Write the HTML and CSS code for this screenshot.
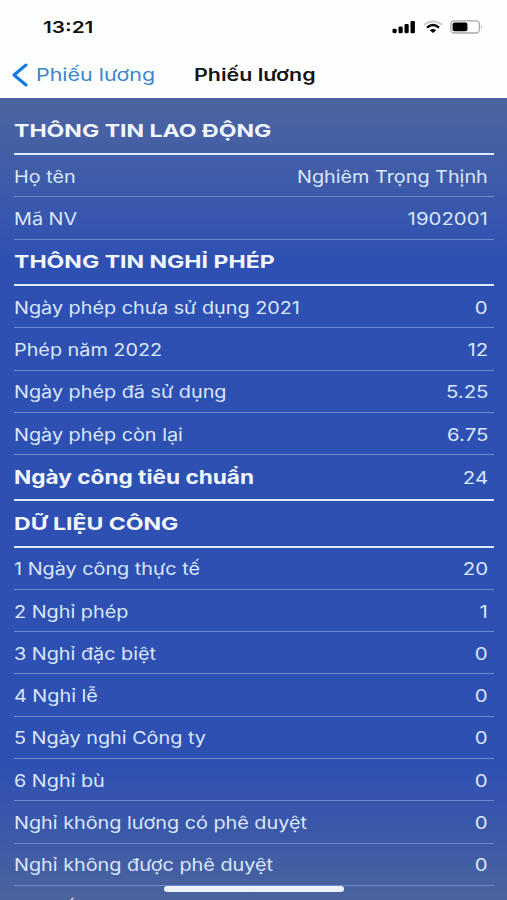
FILE: index.html
```
<!DOCTYPE html>
<html lang="vi">
<head>
    <meta charset="UTF-8">
    <meta name="viewport" content="width=device-width, initial-scale=1.0">
    <title>Phiếu lương</title>
    <link rel="stylesheet" href="styles.css">
</head>
<body>
    <div class="status-bar">
        <span class="time">13:21</span>
        <div class="status-icons">
            <svg class="signal" width="24" height="14" viewBox="0 0 24 14">
                <rect x="0.5" y="8.7" width="4.2" height="4.5" rx="1.4"/>
                <rect x="6.5" y="6.5" width="4.2" height="6.7" rx="1.2"/>
                <rect x="12.5" y="4" width="4.2" height="9.2" rx="1.2"/>
                <rect x="18.5" y="1" width="4.4" height="12.2" rx="1.2"/>
            </svg>
            <svg class="wifi" width="20" height="14" viewBox="0 0 20 14" fill="none">
                <path d="M1 4.8Q10 -2.2 19 4.8" stroke="#c9c9c9" stroke-width="1.8"/>
                <path d="M4 7.6Q10 2.4 16 7.6" stroke="#000" stroke-width="2.5"/>
                <path d="M6.8 10.2Q10 8 13.2 10.2L10 13.1Z" fill="#000"/>
            </svg>
            <svg class="battery" width="34" height="14" viewBox="0 0 34 14">
                <rect x="0.8" y="0.8" width="28.6" height="12.2" rx="3.5" fill="none" stroke="#a9a9a9" stroke-width="1.3"/>
                <rect x="2.6" y="2.5" width="14.8" height="8.8" rx="1.8"/>
                <path d="M31 5q2 1.9 0 3.8z" fill="#a9a9a9"/>
            </svg>
        </div>
    </div>

    <header class="nav-bar">
        <a class="back" href="#">
            <svg width="16" height="24" viewBox="0 0 16 24">
                <path d="M14 2L2 12l12 10" fill="none" stroke="#1479e8" stroke-width="3" stroke-linecap="round" stroke-linejoin="round"/>
            </svg>
            <span class="text">Phiếu lương</span>
        </a>
        <h1 class="text">Phiếu lương</h1>
    </header>

    <main class="payslip">
        <h2 class="section first"><span class="text">THÔNG TIN LAO ĐỘNG</span></h2>
        <div class="row"><span class="text">Họ tên</span><span class="value name">Nghiêm Trọng Thịnh</span></div>
        <div class="row"><span class="text">Mã NV</span><span class="value">1902001</span></div>

        <h2 class="section"><span class="text">THÔNG TIN NGHỈ PHÉP</span></h2>
        <div class="row"><span class="text">Ngày phép chưa sử dụng 2021</span><span class="value">0</span></div>
        <div class="row"><span class="text">Phép năm 2022</span><span class="value">12</span></div>
        <div class="row"><span class="text">Ngày phép đã sử dụng</span><span class="value">5.25</span></div>
        <div class="row"><span class="text">Ngày phép còn lại</span><span class="value">6.75</span></div>
        <div class="row total"><span class="text">Ngày công tiêu chuẩn</span><span class="value">24</span></div>

        <h2 class="section"><span class="text">DỮ LIỆU CÔNG</span></h2>
        <div class="row"><span class="text">1 Ngày công thực tế</span><span class="value">20</span></div>
        <div class="row"><span class="text">2 Nghỉ phép</span><span class="value">1</span></div>
        <div class="row"><span class="text">3 Nghỉ đặc biệt</span><span class="value">0</span></div>
        <div class="row"><span class="text">4 Nghỉ lễ</span><span class="value">0</span></div>
        <div class="row"><span class="text">5 Ngày nghỉ Công ty</span><span class="value">0</span></div>
        <div class="row"><span class="text">6 Nghỉ bù</span><span class="value">0</span></div>
        <div class="row"><span class="text">Nghỉ không lương có phê duyệt</span><span class="value">0</span></div>
        <div class="row"><span class="text">Nghỉ không được phê duyệt</span><span class="value">0</span></div>
        <div class="row"><span class="text">Nghỉ ốm</span><span class="value"></span></div>
    </main>

    <div class="home-indicator"></div>
</body>
</html>
```
FILE: styles.css
```
* {
    box-sizing: border-box;
    margin: 0;
    padding: 0;
}

body {
    font-family: Inter, "Liberation Sans", sans-serif;
    font-size: 17px;
    background-color: #fdfefe;
    height: 900px;
    overflow: hidden;
    display: flex;
    flex-direction: column;
    position: relative;
}

/* wide lettering */
.text,
.value,
.time {
    display: inline-block;
    white-space: nowrap;
    transform: scaleX(1.165);
    transform-origin: left center;
}

.status-bar {
    height: 54px;
    padding: 0 23px 0 43px;
    display: flex;
    align-items: center;
    justify-content: space-between;
    flex-shrink: 0;
}

.time {
    font-size: 16.5px;
    font-weight: 600;
    color: #111;
    transform: scaleX(1.26);
}

.status-icons {
    display: flex;
    gap: 7px;
}

.nav-bar {
    height: 44px;
    padding: 0 12px 3px;
    display: grid;
    grid-template-columns: 182px 1fr;
    align-items: center;
    flex-shrink: 0;
}

.nav-bar .text {
    transform: scaleX(1.26);
    padding-top: 1px;
}

.back {
    display: flex;
    align-items: center;
    gap: 8px;
    color: #3b86cb;
    text-decoration: none;
}

.nav-bar h1 {
    justify-self: start;
    font-size: 17px;
    font-weight: 600;
    color: #151515;
}

.payslip {
    flex: 1;
    min-height: 0;
    overflow: hidden;
    padding: 0 13px 0 14px;
    color: #dbe7fb;
    background: linear-gradient(#4c65a0 0, #3f5ca9 80px, #2e50b3 165px, #2e50b3 665px, #3d5aa8 740px, #4b649d 802px);
}

.section {
    height: 46.5px;
    display: flex;
    align-items: center;
    font-size: 18px;
    font-weight: 700;
    color: #f1f6ff;
    border-bottom: 2px solid #dfe9fb;
}

.section .text {
    transform: scaleX(1.28);
}

.section.first {
    height: 57px;
    padding-top: 9px;
}

.row {
    height: 42.3px;
    padding: 2px 6px 0 0;
    display: flex;
    align-items: center;
    justify-content: space-between;
    border-bottom: 1px solid #6d8aca;
}

.value {
    transform: scaleX(1.2);
    transform-origin: right center;
}

.value.name {
    transform: scaleX(1.165);
}

.row.total {
    height: 45.8px;
    padding-top: 1px;
    border-bottom: 2px solid #dfe9fb;
}

.total .text {
    font-size: 19px;
    font-weight: 700;
    color: #f1f6ff;
    transform: scaleX(1.19);
}

.home-indicator {
    position: absolute;
    left: 164px;
    bottom: 8px;
    width: 180px;
    height: 6px;
    border-radius: 3px;
    background-color: #eef0fa;
}
```
